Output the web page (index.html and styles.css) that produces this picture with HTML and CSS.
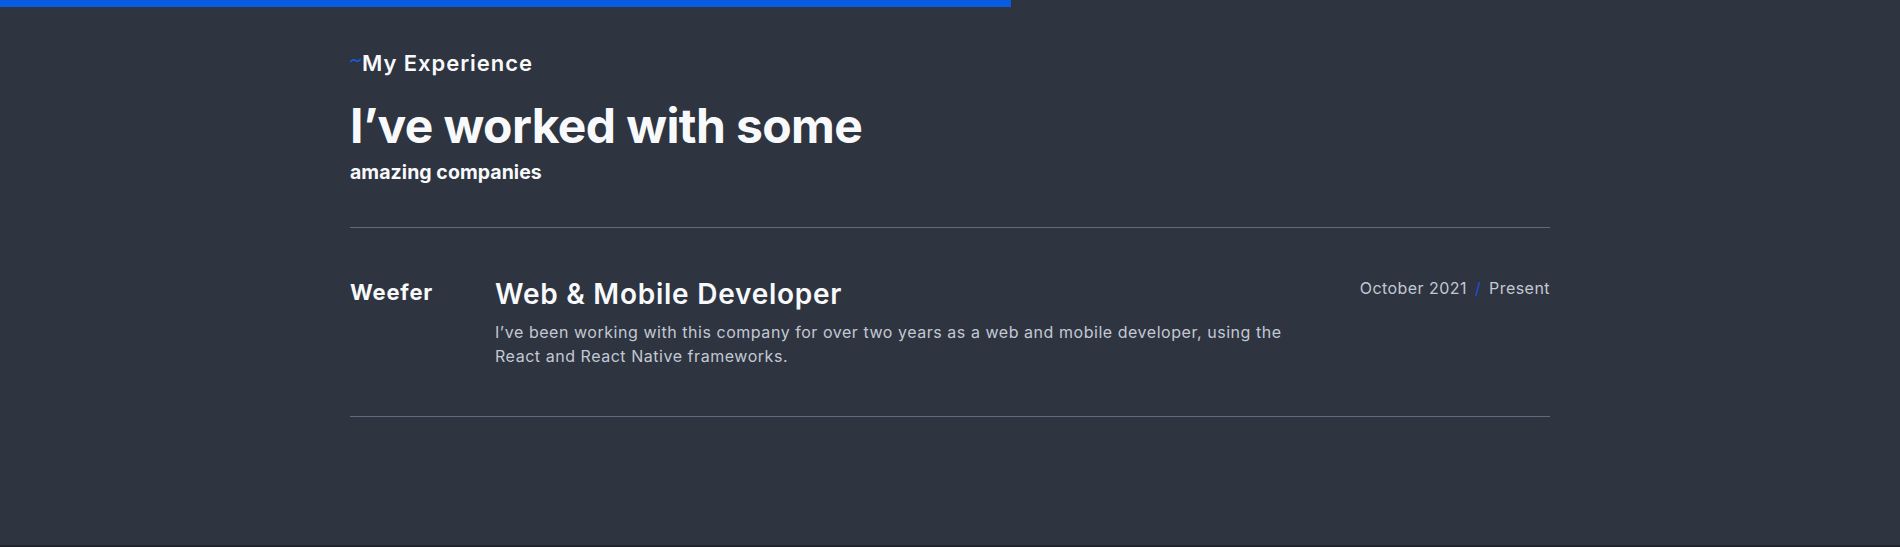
FILE: index.html
```html
<!DOCTYPE html>
<html lang="en">
<head>
<meta charset="utf-8">
<title>Experience</title>
<link rel="stylesheet" href="styles.css">
</head>
<body>
<div class="progress" style="width:1011px"></div>
<section class="experience">
  <div class="container">
    <p class="eyebrow"><svg class="wave" width="11" height="5" viewBox="0 0 11 5"><path d="M0.8 3.6 Q2.8 0.9 5.4 2.5 T10.2 1.4" fill="none" stroke="#1a5ce6" stroke-width="1.6" stroke-linecap="round"/></svg>My Experience</p>
    <h2 class="title">I’ve worked with some</h2>
    <p class="subtitle">amazing companies</p>
    <ul class="jobs">
      <li class="job">
        <h3 class="company">Weefer</h3>
        <div class="job-body">
          <h4 class="role">Web &amp; Mobile Developer</h4>
          <p class="desc">I’ve been working with this company for over two years as a web and mobile developer, using the React and React Native frameworks.</p>
        </div>
        <p class="date">October 2021 <span class="sep">/</span> Present</p>
      </li>
    </ul>
  </div>
</section>
<footer class="foot"></footer>
</body>
</html>
```
FILE: styles.css
```css
* { box-sizing: border-box; }
html, body { margin: 0; padding: 0; }
body {
  background: #2e3440;
  color: #f8f9fb;
  font-family: Inter, "Noto Sans", sans-serif;
  height: 547px;
  overflow: hidden;
}
.progress {
  position: fixed;
  top: 0;
  left: 0;
  height: 7px;
  background: #085ce0;
}
.experience {
  height: 545px;
  padding-top: 49px;
}
.container {
  width: 1200px;
  margin: 0 auto;
}
.eyebrow {
  margin: 0;
  font-size: 22px;
  line-height: 28px;
  font-weight: 600;
  letter-spacing: 0.95px;
  display: flex;
  align-items: flex-start;
}
.wave { margin-top: 9px; margin-right: 1px; flex: none; }
.title {
  margin: 20px 0 0;
  font-size: 48px;
  line-height: 58px;
  font-weight: 700;
  letter-spacing: -0.6px;
}
.subtitle {
  margin: 4px 0 0;
  font-size: 19.5px;
  line-height: 26px;
  font-weight: 700;
  letter-spacing: 0.05px;
}
.jobs {
  list-style: none;
  margin: 42px 0 0;
  padding: 0;
  border-top: 1px solid #5f6980;
}
.job {
  display: flex;
  align-items: flex-start;
  padding: 48px 0 48px;
  border-bottom: 1px solid #5f6980;
}
.company {
  width: 145px;
  flex: none;
  margin: 2px 0 0;
  font-size: 22px;
  line-height: 28px;
  font-weight: 700;
  letter-spacing: 0.8px;
}
.job-body {
  width: 800px;
  flex: none;
}
.role {
  margin: 0;
  font-size: 28px;
  line-height: 36px;
  font-weight: 600;
  letter-spacing: 0.75px;
}
.desc {
  margin: 8px 0 0;
  font-size: 16px;
  line-height: 24px;
  letter-spacing: 0.54px;
  color: #c3c9d4;
}
.date {
  margin: 0 0 0 auto;
  font-size: 16px;
  line-height: 24px;
  letter-spacing: 0.45px;
  color: #c3c9d4;
  white-space: nowrap;
}
.sep { color: #1a4fe0; margin: 0 3px; }
.foot {
  height: 2px;
  background: #1f232b;
}
```
